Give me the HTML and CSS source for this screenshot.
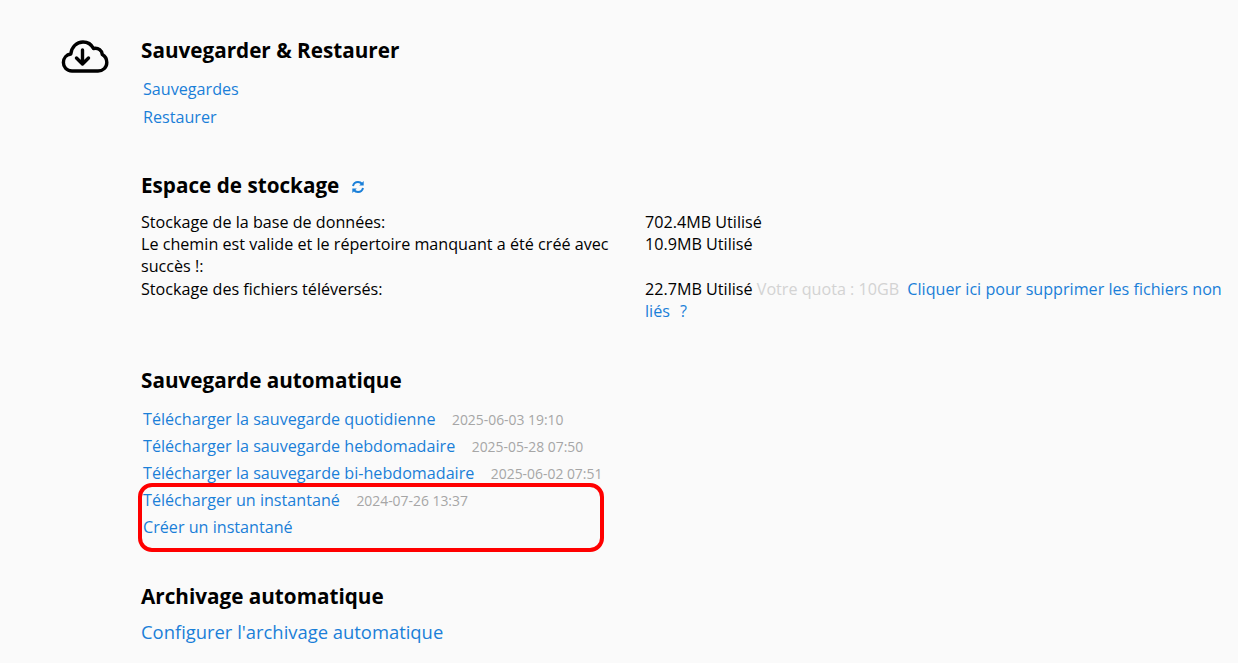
FILE: index.html
```html
<!DOCTYPE html>
<html lang="fr">
<head>
<meta charset="utf-8">
<title>Sauvegarder &amp; Restaurer</title>
<link rel="stylesheet" href="styles.css">
</head>
<body>
<div class="page">
  <div class="icon-col">
    <svg class="cloud" width="48" height="34" viewBox="0 0 48 34" fill="none" stroke="#000" stroke-width="3.400" stroke-linecap="round" stroke-linejoin="round">
      <path d="M11 31C5.500 31 2.400 27 2.400 22.500C2.400 18 5.500 14.500 9.800 14C10.600 7 15.500 2 22 2C26.500 2 30.500 4.500 32.500 8.500C37.500 7.500 41 10.500 41.300 14.500C44 16 45.800 19 45.800 22.500C45.800 27.500 42 31 37 31Z"/>
      <path d="M21.500 10V24M15.500 18L21.500 24L27.500 18"/>
    </svg>
  </div>
  <div class="content">
    <section class="sec-backup">
      <h2>Sauvegarder &amp; Restaurer</h2>
      <ul class="links">
        <li><a href="#">Sauvegardes</a></li>
        <li><a href="#">Restaurer</a></li>
      </ul>
    </section>
    <section class="sec-storage">
      <h2>Espace de stockage
        <svg class="refresh" width="14" height="14" viewBox="0 0 14 14" fill="none" stroke="#1a7fd8" stroke-width="2">
          <path d="M2 6C2.600 3.500 4.600 2 7 2C8.800 2 10.200 2.800 11.200 4"/>
          <path d="M12 8C11.400 10.500 9.400 12 7 12C5.200 12 3.800 11.200 2.800 10"/>
          <path d="M12.700 1V5.500H8.200Z" fill="#1a7fd8" stroke="none"/>
          <path d="M1.300 13V8.500H5.800Z" fill="#1a7fd8" stroke="none"/>
        </svg>
      </h2>
      <div class="stats">
        <div>Stockage de la base de données:</div>
        <div>702.4MB Utilisé</div>
        <div>Le chemin est valide et le répertoire manquant a été créé avec succès !:</div>
        <div>10.9MB Utilisé</div>
        <div>Stockage des fichiers téléversés:</div>
        <div>22.7MB Utilisé <span class="quota">Votre quota : 10GB</span> <a class="purge" href="#">Cliquer ici pour supprimer les fichiers non liés</a> <a class="help" href="#">?</a></div>
      </div>
    </section>
    <section class="sec-auto">
      <h2>Sauvegarde automatique</h2>
      <ul class="links">
        <li><a href="#">Télécharger la sauvegarde quotidienne</a><span class="date">2025-06-03 19:10</span></li>
        <li><a href="#">Télécharger la sauvegarde hebdomadaire</a><span class="date">2025-05-28 07:50</span></li>
        <li><a href="#">Télécharger la sauvegarde bi-hebdomadaire</a><span class="date">2025-06-02 07:51</span></li>
        <li><a href="#">Télécharger un instantané</a><span class="date">2024-07-26 13:37</span></li>
        <li><a href="#">Créer un instantané</a></li>
      </ul>
    </section>
    <section class="sec-archive">
      <h2>Archivage automatique</h2>
      <a class="archive-link" href="#">Configurer l'archivage automatique</a>
    </section>
  </div>
</div>
<div class="highlight"></div>
</body>
</html>
```
FILE: styles.css
```css
html, body {
  margin: 0;
  padding: 0;
  height: 663px;
  overflow: hidden;
  background: #fafafa;
  color: #000;
  font-family: "Open Sans", sans-serif;
  font-size: 16.150px;
}
.page {
  display: flex;
  padding: 36px 8px 0 0;
}
.icon-col {
  width: 141px;
  flex: none;
  padding: 4px 0 0 61px;
  box-sizing: border-box;
}
.cloud { display: block; }
.content { flex: 1; min-width: 0; }
h2 {
  margin: 0;
  font-size: 20.700px;
  line-height: 28px;
  font-weight: 700;
}
a { color: #1a7fd8; text-decoration: none; }
.links {
  list-style: none;
  margin: 12px 0 0;
  padding: 0 0 0 2px;
}
.links li { height: 27px; line-height: 27px; white-space: nowrap; }
.sec-backup .links { margin-top: 11px; }
.sec-backup .links li { height: 28px; line-height: 28px; }
.date {
  margin-left: 16.500px;
  color: #a6a6a6;
  font-size: 13.900px;
}
.sec-storage { margin-top: 40px; }
.refresh { margin-left: 6px; vertical-align: -1px; }
.stats {
  display: grid;
  grid-template-columns: 504px 1fr;
  margin-top: 12px;
  line-height: 22.200px;
}
.quota { color: #d3d3d3; }
.purge { margin-left: 4px; }
.help { margin-left: 6px; }
.sec-auto { margin-top: 44px; }
.sec-archive { margin-top: 41px; }
.archive-link { display: block; margin-top: 9px; font-size: 18.400px; line-height: 26px; }
.highlight {
  position: absolute;
  left: 138px;
  top: 483px;
  width: 458px;
  height: 61px;
  border: 4px solid #f00;
  border-radius: 14px;
}
```
